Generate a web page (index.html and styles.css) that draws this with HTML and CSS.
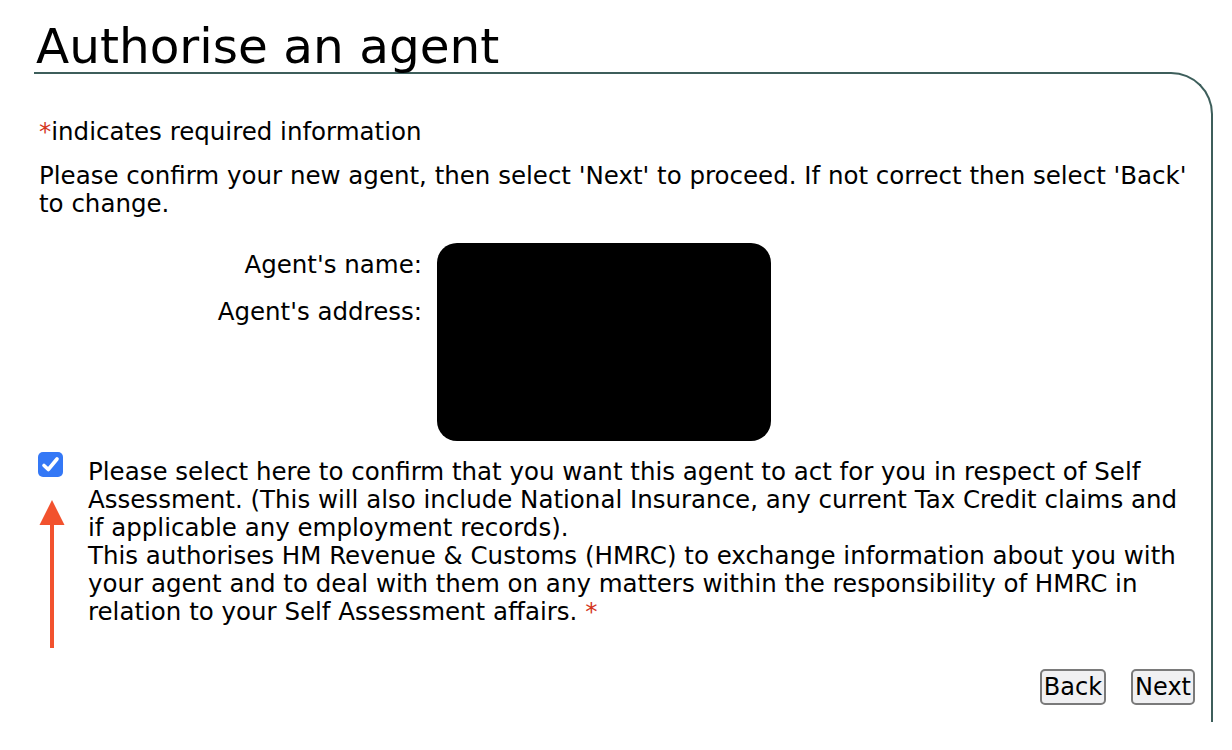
FILE: index.html
```html
<!DOCTYPE html>
<html lang="en">

<head>
    <meta charset="UTF-8">
    <title>Authorise an agent</title>
    <link rel="stylesheet" href="styles.css">
</head>

<body>
    <h1 class="title">Authorise an agent</h1>
    <form class="panel">
        <p class="required"><span class="star">*</span>indicates required information</p>
        <p class="intro">Please confirm your new agent, then select 'Next' to proceed. If not correct then select 'Back' to change.</p>

        <!-- agent details -->
        <div class="details">
            <div class="labels">
                <span>Agent's name:</span>
                <span>Agent's address:</span>
            </div>
            <div class="redacted"></div>
        </div>

        <!-- confirmation -->
        <div class="confirm">
            <div class="tick-col">
                <span class="tick">
                    <svg width="25" height="25" viewBox="0 0 25 25">
                        <path d="M6 13.5 L10.3 17.5 L19 7" fill="none" stroke="#fff" stroke-width="3.6" stroke-linecap="round" stroke-linejoin="round"/>
                    </svg>
                </span>
                <svg class="arrow" width="26" height="148" viewBox="0 0 26 148">
                    <path d="M13 0 L25.5 25 L0.5 25 Z" fill="#f2522e"/>
                    <rect x="11" y="22" width="4" height="126" fill="#f2522e"/>
                </svg>
            </div>
            <p class="confirm-text">Please select here to confirm that you want this agent to act for you in respect of Self Assessment. (This will also include National Insurance, any current Tax Credit claims and if applicable any employment records).<br>This authorises HM Revenue &amp; Customs (HMRC) to exchange information about you with your agent and to deal with them on any matters within the responsibility of HMRC in relation to your Self Assessment affairs. <span class="star">*</span></p>
        </div>

        <div class="actions">
            <button type="button" class="btn">Back</button>
            <button type="button" class="btn">Next</button>
        </div>
    </form>
</body>

</html>
```

FILE: styles.css
```css
* {
    box-sizing: border-box;
}

body {
    margin: 0;
    font-family: "DejaVu Sans", Verdana, sans-serif;
    font-size: 24.5px;
    line-height: 28px;
    color: #000;
    background: #fff;
}

.title {
    margin: 0 0 0 36px;
    padding-top: 20px;
    font-size: 48.5px;
    line-height: 52px;
    font-weight: normal;
}

.panel {
    width: 1179px;
    height: 650px;
    margin-left: 34px;
    padding: 0 16px 0 5px;
    border-top: 2px solid #3d5e5b;
    border-right: 2px solid #3d5e5b;
    border-top-right-radius: 42px;
}

.required {
    margin: 44px 0 0;
}

.star {
    color: #d4351c;
}

.intro {
    margin: 16px 0 0;
}

.details {
    display: flex;
    gap: 15px;
    margin-top: 25px;
}

.labels {
    display: flex;
    flex-direction: column;
    gap: 19px;
    width: 383px;
    padding-top: 8px;
    text-align: right;
}

.redacted {
    width: 334px;
    height: 198px;
    background: #000;
    border-radius: 20px;
}

.confirm {
    display: flex;
    gap: 25px;
    margin: 11px 0 0 -1px;
}

.tick-col {
    display: flex;
    flex-direction: column;
    align-items: center;
    width: 25px;
    flex-shrink: 0;
}

.tick {
    display: block;
    width: 25px;
    height: 25px;
    background: #3478f6;
    border-radius: 5px;
}

.tick svg {
    display: block;
}

.arrow {
    display: block;
    margin-top: 23px;
    margin-left: 3px;
}

.confirm-text {
    flex: 1;
    margin: 6px 0 0;
}

.actions {
    display: flex;
    justify-content: flex-end;
    gap: 25px;
    margin-top: 21px;
}

.btn {
    height: 36px;
    padding: 0 2px;
    font-family: "DejaVu Sans", Verdana, sans-serif;
    font-size: 24px;
    color: #000;
    background: #f0f0f2;
    border: 2px solid #7a7a7a;
    border-radius: 5px;
}
```
